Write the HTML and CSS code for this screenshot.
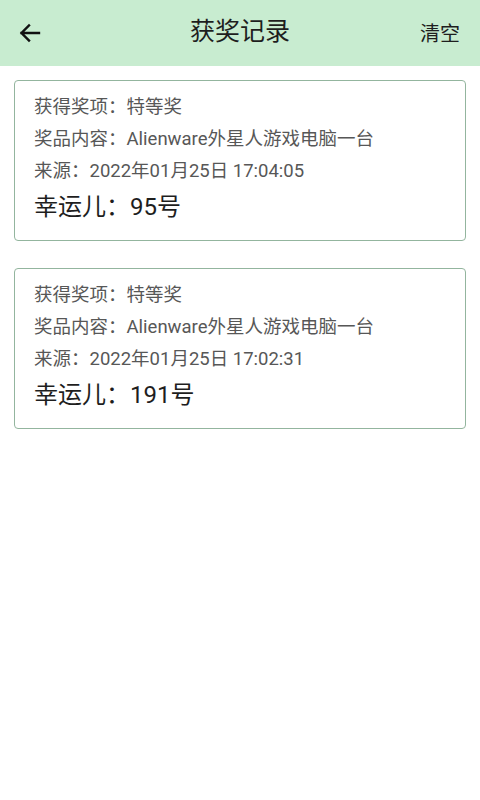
FILE: index.html
```html
<!DOCTYPE html>
<html lang="zh-CN">
<head>
<meta charset="utf-8">
<link rel="stylesheet" href="styles.css">
</head>
<body>
<header class="bar">
  <span class="back">
    <svg width="24" height="24" viewBox="0 0 24 24"><path d="M21 12H3.5M11 4.5L3.5 12L11 19.5" fill="none" stroke="#111" stroke-width="2.4" stroke-linecap="square"/></svg>
  </span>
  <h1 class="title">获奖记录</h1>
  <span class="clear">清空</span>
</header>
<main class="list">
  <section class="card">
    <p class="line">获得奖项：特等奖</p>
    <p class="line">奖品内容：Alienware外星人游戏电脑一台</p>
    <p class="line">来源：2022年01月25日 17:04:05</p>
    <p class="lucky">幸运儿：95号</p>
  </section>
  <section class="card">
    <p class="line">获得奖项：特等奖</p>
    <p class="line">奖品内容：Alienware外星人游戏电脑一台</p>
    <p class="line">来源：2022年01月25日 17:02:31</p>
    <p class="lucky">幸运儿：191号</p>
  </section>
</main>
</body>
</html>
```
FILE: styles.css
```css
html, body {
  margin: 0;
  padding: 0;
  background: #ffffff;
  font-family: Roboto, "Noto Sans CJK SC", sans-serif;
}
.bar {
  height: 66px;
  background: #c8ecd0;
  display: flex;
  align-items: center;
  justify-content: space-between;
  padding: 0 20px 0 18px;
  position: relative;
}
.back {
  display: flex;
  width: 24px;
  height: 24px;
}
.title {
  position: absolute;
  left: 0;
  right: 0;
  top: 14px;
  line-height: 36px;
  text-align: center;
  margin: 0;
  font-size: 25px;
  font-weight: 400;
  color: #1e1e1e;
  pointer-events: none;
}
.clear {
  font-size: 20px;
  color: #1e1e1e;
  margin-top: -2px;
}
.list {
  display: flex;
  flex-direction: column;
  gap: 27px;
  padding: 14px 14px;
}
.card {
  border: 1.5px solid #93b59e;
  border-radius: 4px;
  padding: 10px 19px 14px;
}
.line {
  margin: 0;
  font-size: 18.5px;
  line-height: 32px;
  color: #575757;
}
.lucky {
  margin: 1px 0 0;
  font-size: 24px;
  line-height: 38px;
  color: #1e1e1e;
}
```
